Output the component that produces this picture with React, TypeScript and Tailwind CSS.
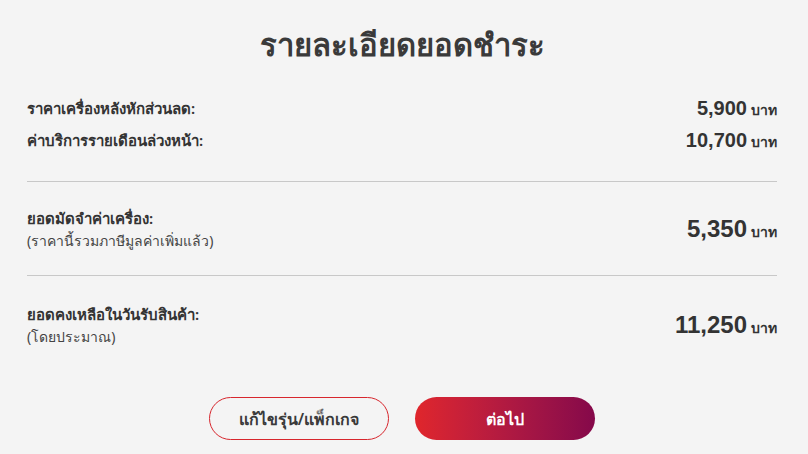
import React from 'react'

const font = { fontFamily: '"Noto Sans", "Liberation Sans", sans-serif' }
const num = { fontFamily: '"Liberation Sans", Arial, sans-serif' }

function Amount({ value, big }: { value: string; big?: boolean }) {
  return (
    <div className="flex items-baseline gap-1 text-[#333333]">
      <span className={big ? 'text-[24px] font-bold' : 'text-[20px] font-bold'} style={num}>{value}</span>
      <span className="text-[14px] font-semibold">บาท</span>
    </div>
  )
}

export default function App() {
  return (
    <div className="w-[808px] h-[454px] bg-[#f4f4f4] overflow-hidden" style={font}>
      <div className="pl-[27px] pr-[31px] pt-[22px]">
        <h1 className="text-center text-[31px] font-bold text-[#3a3a3a] leading-[44px]">รายละเอียดยอดชำระ</h1>

        <div className="mt-[30px] flex flex-col gap-[8px] text-[#333333]">
          <div className="flex items-center justify-between h-[24px]">
            <span className="text-[15px] font-semibold">ราคาเครื่องหลังหักส่วนลด:</span>
            <Amount value="5,900" />
          </div>
          <div className="flex items-center justify-between h-[24px]">
            <span className="text-[15px] font-semibold">ค่าบริการรายเดือนล่วงหน้า:</span>
            <Amount value="10,700" />
          </div>
        </div>

        <div className="mt-[29px] border-t border-[#c8c8c8]" />

        <div className="flex items-center justify-between h-[93px] text-[#333333]">
          <div className="flex flex-col">
            <span className="text-[15px] font-semibold leading-[24px]">ยอดมัดจำค่าเครื่อง:</span>
            <span className="text-[14px] leading-[22px] text-[#444444]">(ราคานี้รวมภาษีมูลค่าเพิ่มแล้ว)</span>
          </div>
          <Amount value="5,350" big />
        </div>

        <div className="border-t border-[#c8c8c8]" />

        <div className="flex items-center justify-between h-[98px] text-[#333333]">
          <div className="flex flex-col">
            <span className="text-[15px] font-semibold leading-[24px]">ยอดคงเหลือในวันรับสินค้า:</span>
            <span className="text-[14px] leading-[22px] text-[#444444]">(โดยประมาณ)</span>
          </div>
          <Amount value="11,250" big />
        </div>

        <div className="mt-[23px] flex justify-center gap-[26px]">
          <button className="w-[180px] h-[43px] rounded-full border border-[#d7262d] bg-transparent text-[16px] font-semibold text-[#3a3a3a]">
            แก้ไขรุ่น/แพ็กเกจ
          </button>
          <button className="w-[180px] h-[43px] rounded-full bg-gradient-to-r from-[#e0262b] to-[#85084a] text-[16px] font-bold text-white">
            ต่อไป
          </button>
        </div>
      </div>
    </div>
  )
}
